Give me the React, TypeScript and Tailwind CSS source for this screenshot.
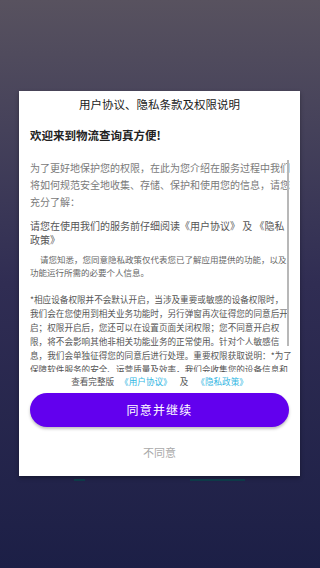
import React from 'react'

const font = { fontFamily: '"Noto Sans CJK SC", "Noto Sans", sans-serif' }

export default function App() {
  return (
    <div
      className="flex h-[568px] w-[320px] flex-col overflow-hidden bg-gradient-to-b from-[#58525f] via-[#302d53] to-[#1c1f46]"
      style={font}
    >
      <div className="mx-[19px] mt-[91px] flex h-[385px] w-[281px] flex-col bg-white shadow-[0_2px_4px_rgba(0,0,0,0.35)]">
        <div className="flex h-[28px] items-center justify-center text-[11.5px] text-[#222]">
          用户协议、隐私条款及权限说明
        </div>
        <div className="ml-[11px] mt-[8px] h-[16px] text-[11.5px] leading-[16px] font-bold text-[#222]">
          欢迎来到物流查询真方便!
        </div>

        {/* scrolling body */}
        <div className="relative ml-[11px] mt-[15.5px] h-[213.5px] w-[266px] overflow-hidden whitespace-nowrap">
          <p className="text-[10px] leading-[17px] text-[#7a7a7a]">
            为了更好地保护您的权限，在此为您介绍在服务过程中我们
            <br />
            将如何规范安全地收集、存储、保护和使用您的信息，请您
            <br />
            充分了解：
          </p>
          <p className="mt-[9.5px] text-[10px] leading-[14px] text-[#555]">
            请您在使用我们的服务前仔细阅读《用户协议》 及 《隐私
            <br />
            政策》
          </p>
          <p className="mt-[5.5px] text-[8.5px] leading-[13px] text-[#666]">
            <span className="pl-[10px]">请您知悉，您同意隐私政策仅代表您已了解应用提供的功能，以及</span>
            <br />
            功能运行所需的必要个人信息。
          </p>
          <p className="mt-[13.5px] text-[8.6px] leading-[14px] text-[#555]">
            *相应设备权限并不会默认开启，当涉及重要或敏感的设备权限时，
            <br />
            我们会在您使用到相关业务功能时，另行弹窗再次征得您的同意后开
            <br />
            启；权限开启后，您还可以在设置页面关闭权限；您不同意开启权
            <br />
            限，将不会影响其他非相关功能业务的正常使用。针对个人敏感信
            <br />
            息，我们会单独征得您的同意后进行处理。重要权限获取说明：*为了
            <br />
            保障软件服务的安全、运营质量及效率，我们会收集您的设备信息和
          </p>
          <div className="absolute left-[257px] top-[1.5px] h-[186px] w-[2px] bg-[#b8b8b8]" />
        </div>

        <div className="mt-[3px] flex h-[12px] items-center justify-center text-[8.6px] text-[#555]">
          <span>查看完整版</span>
          <span className="ml-[6px] text-[#33b7e3]">《用户协议》</span>
          <span className="mx-[8px]">及</span>
          <span className="text-[#33b7e3]">《隐私政策》</span>
        </div>

        <button className="mx-[11px] mt-[6px] flex h-[34px] items-center justify-center rounded-full bg-[#6200ee] text-[12px] tracking-[1.2px] text-white shadow-[0_2px_3px_rgba(0,0,0,0.25)]">
          同意并继续
        </button>

        <div className="mt-[17px] flex h-[16px] items-center justify-center text-[11px] text-[#aaa]">
          不同意
        </div>
      </div>

      <div className="mt-[3px] flex h-[2px]">
        <div className="ml-[74px] w-[11px] bg-[#0e3a48]" />
        <div className="ml-[105px] w-[55px] bg-[#0e3a48]" />
      </div>
    </div>
  )
}
